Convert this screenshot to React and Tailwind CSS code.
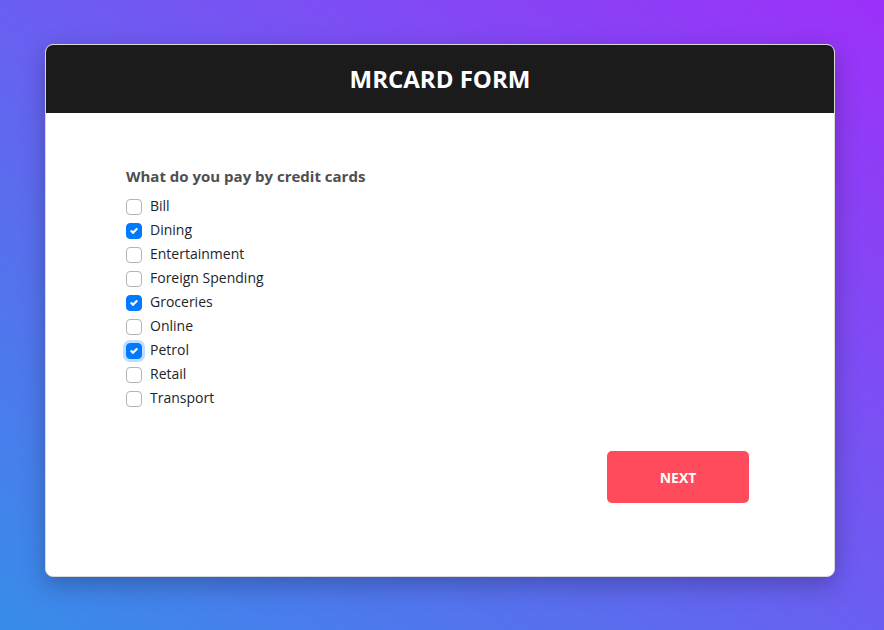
const options = [
  { label: "Bill", checked: false },
  { label: "Dining", checked: true },
  { label: "Entertainment", checked: false },
  { label: "Foreign Spending", checked: false },
  { label: "Groceries", checked: true },
  { label: "Online", checked: false },
  { label: "Petrol", checked: true, focused: true },
  { label: "Retail", checked: false },
  { label: "Transport", checked: false },
];

function Checkbox({ checked, focused }) {
  return (
    <span
      className={`flex h-4 w-4 shrink-0 translate-y-[2px] items-center justify-center rounded-[4px] border ${
        checked ? "border-[#007bff] bg-[#007bff]" : "border-[#adb5bd] bg-white"
      } ${focused ? "shadow-[0_0_0_3px_rgba(0,123,255,0.25)]" : ""}`}
    >
      {checked && (
        <svg viewBox="0 0 8 8" className="h-2 w-2">
          <path fill="#fff" d="M6.564.75l-3.59 3.612-1.538-1.55L0 4.26l2.974 2.99L8 2.193z" />
        </svg>
      )}
    </span>
  );
}

export default function App() {
  return (
    <div className="min-h-[630px] bg-[linear-gradient(to_top_right,#378de9,#9d30f9)] px-[45px] pt-[44px] pb-[54px] font-['Open_Sans',sans-serif]">
      <div className="w-[790px] overflow-hidden rounded-lg border border-[#d9d9d9] bg-white shadow-[0_8px_24px_rgba(0,0,0,0.25)]">
        <div className="flex h-[68px] items-center justify-center bg-[#1b1b1b]">
          <h1 className="text-[24px] font-bold text-white">MRCARD FORM</h1>
        </div>
        <div className="px-[80px] pt-[52px] pb-[73px]">
          <p className="text-[15px] font-bold leading-[22px] text-[#4f4f4f]">What do you pay by credit cards</p>
          <div className="mt-[6px]">
            {options.map((opt) => (
              <label key={opt.label} className="flex h-6 items-center gap-2 text-[14px] text-[#212529]">
                <Checkbox checked={opt.checked} focused={opt.focused} />
                <span>{opt.label}</span>
              </label>
            ))}
          </div>
          <div className="mt-[42px] flex justify-end pr-[5px]">
            <button className="h-[52px] w-[142px] rounded-[5px] bg-[#ff4b5c] text-[14px] font-bold text-white">
              NEXT
            </button>
          </div>
        </div>
      </div>
    </div>
  );
}
